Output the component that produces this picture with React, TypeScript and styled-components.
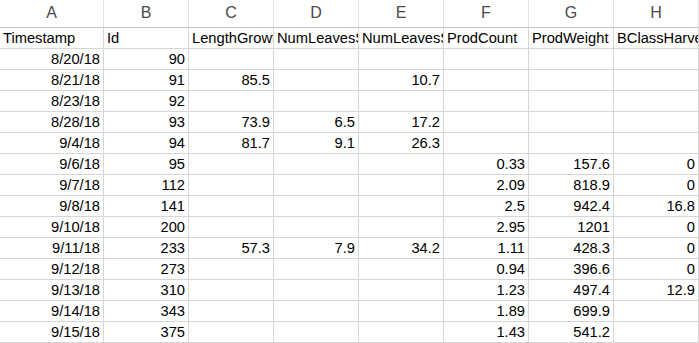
import React from 'react';
import styled, { createGlobalStyle } from 'styled-components';

const GlobalStyle = createGlobalStyle`
  html, body {
    margin: 0;
    padding: 0;
    background: #ffffff;
  }
`;

type Cell = string | number | null;

const columns = ['A', 'B', 'C', 'D', 'E', 'F', 'G', 'H'];

const titles = [
  'Timestamp',
  'Id',
  'LengthGrowth',
  'NumLeavesStart',
  'NumLeavesSum',
  'ProdCount',
  'ProdWeight',
  'BClassHarvest',
];

const rows: Cell[][] = [
  ['8/20/18', 90, null, null, null, null, null, null],
  ['8/21/18', 91, 85.5, null, 10.7, null, null, null],
  ['8/23/18', 92, null, null, null, null, null, null],
  ['8/28/18', 93, 73.9, 6.5, 17.2, null, null, null],
  ['9/4/18', 94, 81.7, 9.1, 26.3, null, null, null],
  ['9/6/18', 95, null, null, null, 0.33, 157.6, 0],
  ['9/7/18', 112, null, null, null, 2.09, 818.9, 0],
  ['9/8/18', 141, null, null, null, 2.5, 942.4, 16.8],
  ['9/10/18', 200, null, null, null, 2.95, 1201, 0],
  ['9/11/18', 233, 57.3, 7.9, 34.2, 1.11, 428.3, 0],
  ['9/12/18', 273, null, null, null, 0.94, 396.6, 0],
  ['9/13/18', 310, null, null, null, 1.23, 497.4, 12.9],
  ['9/14/18', 343, null, null, null, 1.89, 699.9, null],
  ['9/15/18', 375, null, null, null, 1.43, 541.2, null],
];

const Sheet = styled.div`
  display: grid;
  grid-template-columns: 104px repeat(6, 85px) 1fr;
  grid-template-rows: 28px;
  grid-auto-rows: 21px;
  width: 699px;
  height: 343px;
  overflow: hidden;
  font-family: 'Liberation Sans', Arial, sans-serif;
  color: #000;
`;

const ColumnLetter = styled.div`
  box-sizing: border-box;
  border-right: 1px solid #e4e4e4;
  border-bottom: 1px solid #c6c6c6;
  display: flex;
  align-items: center;
  justify-content: center;
  font-size: 16px;
  color: #4a4a4a;
  padding-bottom: 1px;
`;

const DataCell = styled.div<{ $align: 'left' | 'right' }>`
  box-sizing: border-box;
  border-right: 1px solid #d6d6d6;
  border-bottom: 1px solid #d6d6d6;
  padding: 0 3px;
  font-size: 14.7px;
  line-height: 21px;
  text-align: ${(p) => p.$align};
  white-space: nowrap;
  overflow: hidden;
  text-overflow: clip;
`;

function App(): JSX.Element {
  return (
    <>
      <GlobalStyle />
      <Sheet>
        {columns.map((c) => (
          <ColumnLetter key={`col-${c}`}>{c}</ColumnLetter>
        ))}
        {titles.map((t, i) => (
          <DataCell key={`title-${i}`} $align="left">
            {t}
          </DataCell>
        ))}
        {rows.map((row, r) =>
          row.map((v, c) => (
            <DataCell key={`cell-${r}-${c}`} $align="right">
              {v === null ? '' : v}
            </DataCell>
          ))
        )}
      </Sheet>
    </>
  );
}

export default App;
